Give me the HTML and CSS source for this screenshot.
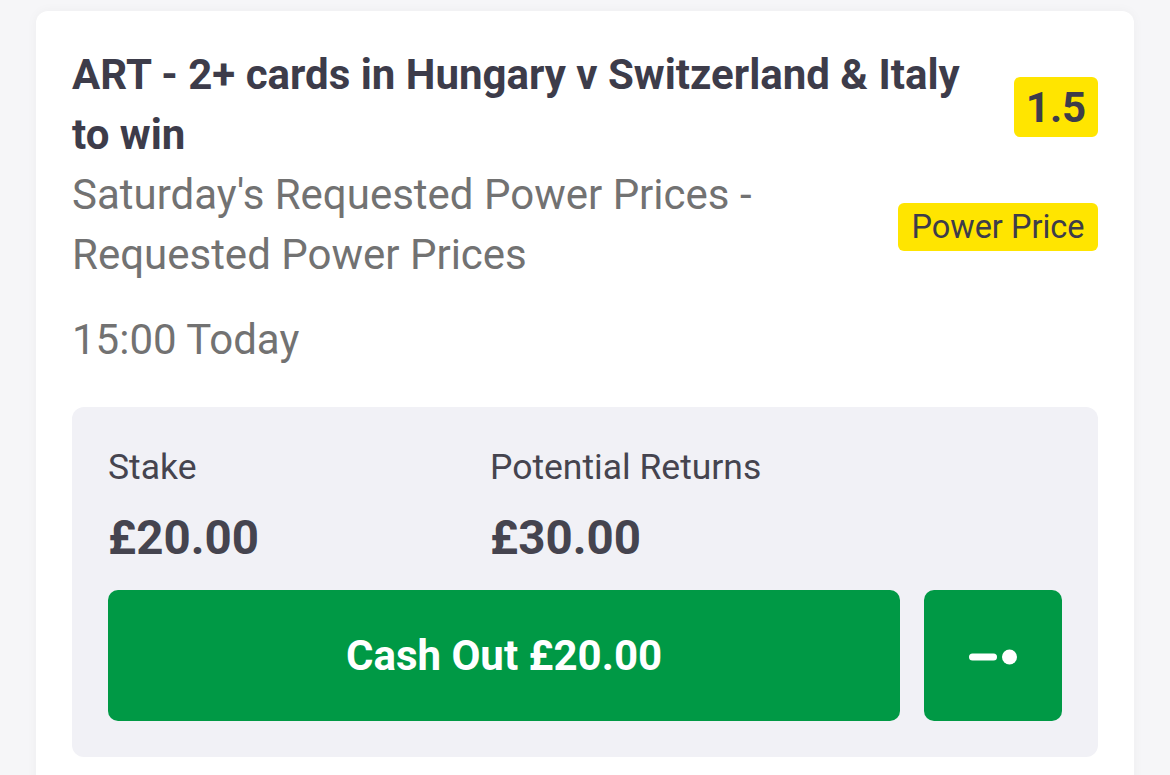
FILE: index.html
```html
<!DOCTYPE html>
<html>
<head>
<meta charset="utf-8">
<link rel="stylesheet" href="styles.css">
</head>
<body>
<div class="card">
  <div class="row">
    <div class="title">ART - 2+ cards in Hungary v Switzerland &amp; Italy to win</div>
    <div class="odds">1.5</div>
  </div>
  <div class="row">
    <div class="sub">Saturday's Requested Power Prices - Requested Power Prices</div>
    <div class="pp">Power Price</div>
  </div>
  <div class="time">15:00 Today</div>
  <div class="panel">
    <div class="stats">
      <div class="stat stake">
        <div class="label">Stake</div>
        <div class="amount">£20.00</div>
      </div>
      <div class="stat">
        <div class="label">Potential Returns</div>
        <div class="amount">£30.00</div>
      </div>
    </div>
    <div class="actions">
      <div class="cashout">Cash Out £20.00</div>
      <div class="slider">
        <svg width="48" height="16" viewBox="0 0 48 16">
          <rect x="0" y="4.5" width="28" height="7" rx="3.5" fill="#fff"/>
          <circle cx="40.5" cy="8" r="7.5" fill="#fff"/>
        </svg>
      </div>
    </div>
  </div>
</div>
</body>
</html>
```
FILE: styles.css
```css
html, body {
  margin: 0;
  padding: 0;
  background: #f6f6f8;
  font-family: Roboto, "Noto Sans", sans-serif;
  overflow: hidden;
}
body {
  height: 775px;
  padding: 11px 36px 0 36px;
  box-sizing: border-box;
}
.card {
  background: #ffffff;
  border-radius: 12px;
  box-shadow: 0 0 12px rgba(0, 0, 0, 0.04);
  padding: 34px 36px 40px 36px;
  width: 1098px;
  box-sizing: border-box;
}
.row {
  display: flex;
  justify-content: space-between;
  align-items: center;
  gap: 20px;
}
.title {
  flex: 1;
  min-width: 0;
  font-size: 42px;
  font-weight: 700;
  line-height: 60px;
  color: #3d3c4a;
}
.sub {
  flex: 1;
  min-width: 0;
  font-size: 42px;
  line-height: 60px;
  color: #727272;
}
.time {
  font-size: 42px;
  line-height: 60px;
  color: #727272;
  margin-top: 25px;
}
.odds {
  flex-shrink: 0;
  background: #ffe500;
  border-radius: 6px;
  height: 60px;
  width: 84px;
  margin-top: 4px;
  display: flex;
  align-items: center;
  justify-content: center;
  font-size: 42px;
  font-weight: 700;
  color: #3d3c4a;
}
.pp {
  flex-shrink: 0;
  background: #ffe500;
  border-radius: 6px;
  height: 48px;
  width: 200px;
  margin-top: 4px;
  display: flex;
  align-items: center;
  justify-content: center;
  font-size: 32.5px;
  color: #3d3c4a;
  white-space: nowrap;
}
.panel {
  margin-top: 37px;
  background: #f1f1f6;
  border-radius: 12px;
  padding: 40px 36px 36px 36px;
}
.stats {
  display: flex;
}
.stat.stake {
  width: 382px;
}
.label {
  font-size: 35.5px;
  line-height: 40px;
  color: #45444f;
}
.amount {
  margin-top: 27px;
  font-size: 47.5px;
  line-height: 48px;
  font-weight: 700;
  color: #45444f;
}
.actions {
  display: flex;
  gap: 24px;
  margin-top: 28px;
}
.cashout {
  flex: 1;
  height: 131px;
  background: #009945;
  border-radius: 10px;
  color: #ffffff;
  font-size: 42px;
  font-weight: 700;
  display: flex;
  align-items: center;
  justify-content: center;
}
.slider {
  width: 138px;
  height: 131px;
  background: #009945;
  border-radius: 10px;
  display: flex;
  align-items: center;
  justify-content: center;
}
.slider svg {
  display: block;
  margin-top: 2px;
}
```
